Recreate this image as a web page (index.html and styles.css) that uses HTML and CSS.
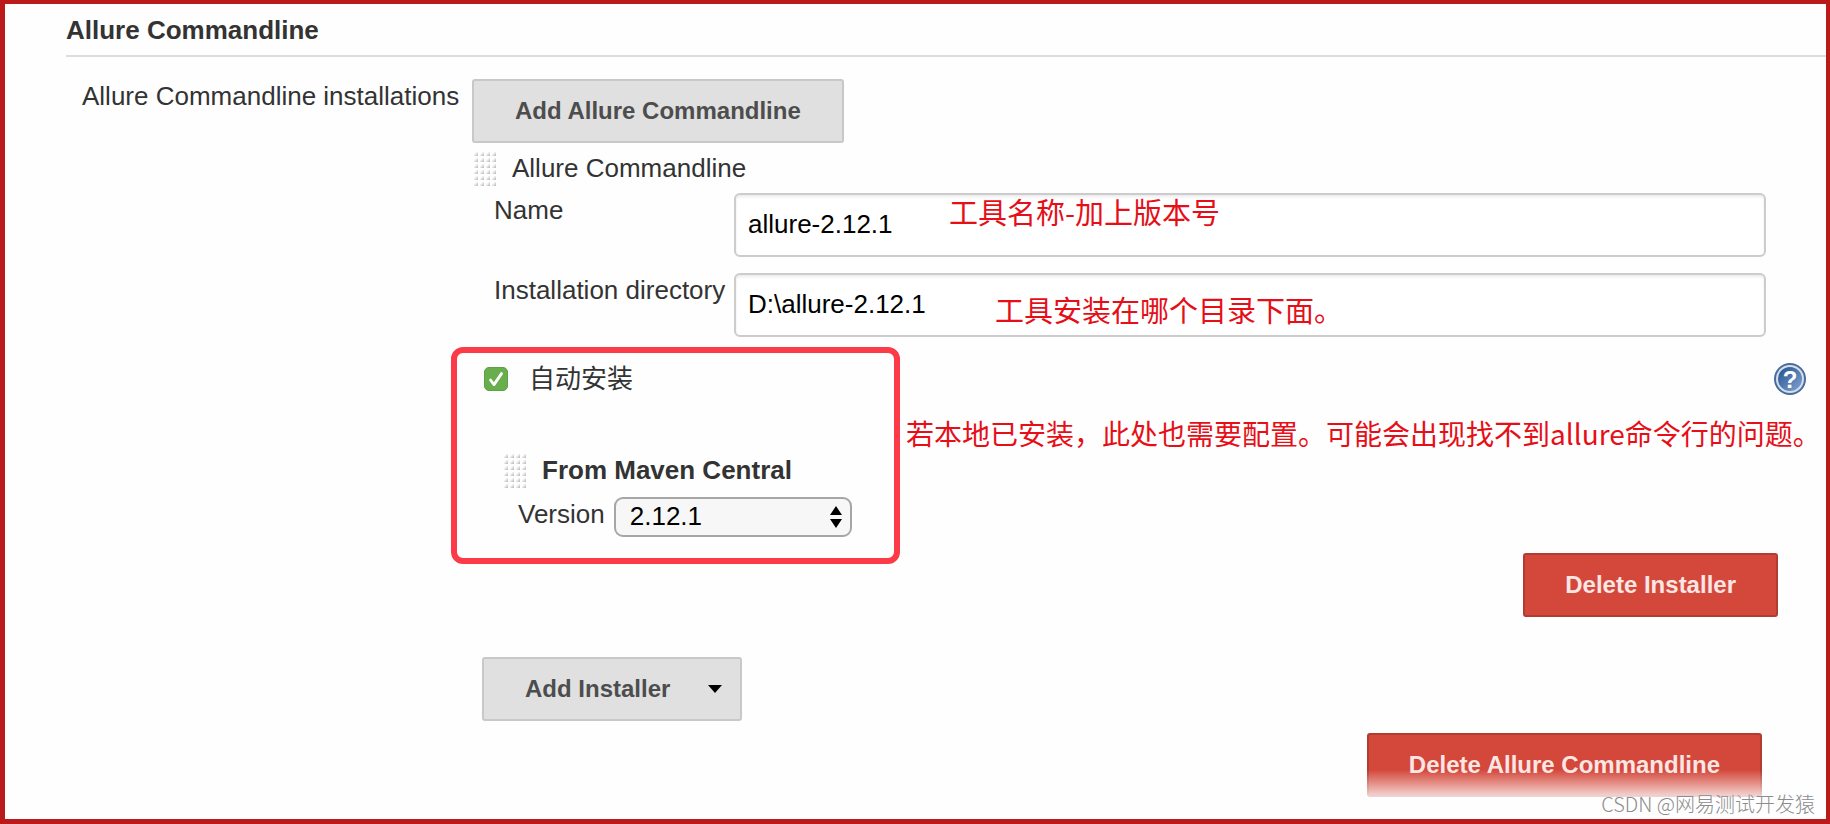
FILE: index.html
```html
<!DOCTYPE html>
<html lang="zh-CN">
<head>
<meta charset="UTF-8" />
<meta name="viewport" content="width=device-width, initial-scale=1" />
<title>Allure Commandline</title>
<link rel="stylesheet" href="styles.css">
</head>
<body>

<main class="panel">
  <h1 class="section-title">Allure Commandline</h1>

  <div class="section">
    <div class="section-label">Allure Commandline installations</div>

    <div class="section-body">
      <button type="button" class="btn">Add Allure Commandline</button>

      <div class="drag-row">
        <span class="grip"></span>
        <span>Allure Commandline</span>
      </div>

      <div class="field">
        <label for="toolName">Name</label>
        <input type="text" id="toolName" value="allure-2.12.1" />
        <span class="note note-name">工具名称-加上版本号</span>
      </div>

      <div class="field">
        <label for="toolHome">Installation directory</label>
        <input type="text" id="toolHome" value="D:\allure-2.12.1" />
        <span class="note note-home">工具安装在哪个目录下面。</span>
      </div>

      <div class="installer">
        <div class="highlight"></div>
        <span class="note note-installer">若本地已安装，此处也需要配置。可能会出现找不到allure命令行的问题。</span>

        <div class="auto-row">
          <span class="check">
            <input type="checkbox" id="autoInstall" checked />
            <svg viewBox="0 0 24 24" aria-hidden="true">
              <path d="M6.5 13L10 17.6L17.5 6.6" fill="none" stroke="#fff" stroke-width="2.8" stroke-linecap="round" stroke-linejoin="round"/>
            </svg>
          </span>
          <label for="autoInstall">自动安装</label>
          <a class="help" href="#" aria-label="Help">
            <svg viewBox="0 0 32 32">
              <defs>
                <linearGradient id="helpFill" x1="0" y1="0" x2="1" y2="1">
                  <stop offset="0" stop-color="#1f4c8c"/>
                  <stop offset="1" stop-color="#86a9d4"/>
                </linearGradient>
              </defs>
              <circle cx="16" cy="16" r="16" fill="#4a6c9c"/>
              <circle cx="16" cy="16" r="13" fill="url(#helpFill)" stroke="#d3dfef" stroke-width="2"/>
              <text x="16" y="25" text-anchor="middle" fill="#fff" class="help-mark">?</text>
            </svg>
          </a>
        </div>

        <div class="drag-row maven">
          <span class="grip"></span>
          <strong>From Maven Central</strong>
        </div>

        <div class="version-row">
          <label for="version">Version</label>
          <span class="select">
            <select id="version">
              <option>2.12.1</option>
            </select>
            <svg viewBox="0 0 12 22" aria-hidden="true">
              <path d="M6 0L12 9H0Z M0 13H12L6 22Z"/>
            </svg>
          </span>
        </div>
      </div>

      <div class="delete-row delete-installer">
        <button type="button" class="btn btn-danger">Delete Installer</button>
      </div>

      <button type="button" class="btn btn-menu">Add Installer
        <svg viewBox="0 0 14 8" aria-hidden="true"><path d="M0 0H14L7 8Z"/></svg>
      </button>

      <div class="delete-row delete-tool">
        <button type="button" class="btn btn-danger">Delete Allure Commandline</button>
      </div>
    </div>
  </div>

  <div class="watermark">CSDN @网易测试开发猿</div>
</main>

</body>
</html>
```

FILE: styles.css
```css
* {
  box-sizing: border-box;
}

body {
  margin: 0;
  font-family: 'Liberation Sans', 'Noto Sans CJK SC', sans-serif;
  font-size: 26px;
  line-height: 30px;
  color: #333;
  background: #fff;
}

.panel {
  position: relative;
  min-height: 100vh;
  padding-bottom: 22px;
  border: 4px solid #bb1a1a;
  border-left-width: 5px;
  border-bottom-width: 5px;
  background: #fefefe;
  overflow: hidden;
}

.section-title {
  margin: 0 0 0 61px;
  padding: 11px 0 10px;
  border-bottom: 2px solid #ddd;
  font-size: 26px;
  font-weight: 700;
}

.section {
  display: flex;
  padding-top: 22px;
}

.section-label {
  flex: 0 0 467px;
  padding: 2px 0 0 77px;
}

.section-body {
  flex: 1;
  min-width: 0;
}

/* buttons */
.btn {
  display: block;
  height: 64px;
  padding: 0 41px;
  border: 2px solid #c8c8c8;
  border-radius: 3px;
  background: #e0e0e0;
  color: #4d4d4d;
  font-family: inherit;
  font-size: 24px;
  font-weight: 700;
  white-space: nowrap;
  cursor: pointer;
}

.btn-danger {
  padding: 0 40px;
  border-color: #b33c32;
  background: #d4483b;
  color: #fbe6e4;
}

.btn-menu {
  display: flex;
  align-items: center;
  gap: 38px;
  margin: 40px 0 12px 10px;
  padding-right: 18px;
}

.btn-menu svg {
  width: 14px;
  height: 8px;
}

/* drag handle rows */
.drag-row {
  display: flex;
  align-items: center;
  gap: 16px;
  margin: 7px 0 7px 2px;
}

.grip {
  width: 22px;
  height: 36px;
  background:
    linear-gradient(#fefefe 2px, transparent 2px) 0 0 / 6px 6px,
    linear-gradient(90deg, transparent 4px, #fefefe 4px) 0 0 / 6px 6px,
    linear-gradient(135deg, #fefefe 35%, #a8a8a8 90%) 0 0 / 6px 6px;
}

/* text fields */
.field {
  position: relative;
  display: flex;
  align-items: flex-start;
  margin: 0 60px 16px 22px;
}

.field label {
  flex: 0 0 240px;
  padding-top: 2px;
}

.field input {
  flex: 1;
  min-width: 0;
  height: 64px;
  padding: 0 12px 2px;
  border: 2px solid #ccc;
  border-radius: 6px;
  background: #fff;
  box-shadow: inset 0 2px 3px rgba(0, 0, 0, 0.08);
  color: #000;
  font-family: inherit;
  font-size: 26px;
}

/* red remarks lying over the form */
.note {
  position: absolute;
  color: #e60f18;
  font-family: 'Noto Sans CJK SC', sans-serif;
  font-size: 28px;
  white-space: nowrap;
}

.field .note {
  font-size: 29px;
}

.note-name {
  top: 3px;
  left: 455px;
}

.note-home {
  top: 21px;
  left: 501px;
}

.note-installer {
  top: 55px;
  left: 434px;
}

.highlight {
  position: absolute;
  top: -16px;
  bottom: -27px;
  left: -21px;
  width: 449px;
  border: 6px solid #fc3a48;
  border-radius: 12px;
  pointer-events: none;
}

/* installer */
.installer {
  position: relative;
  margin-top: 26px;
}

.auto-row {
  display: flex;
  align-items: center;
  margin: 0 20px 0 12px;
}

.check {
  position: relative;
  width: 24px;
  height: 24px;
  margin-right: 21px;
}

.check input {
  display: block;
  appearance: none;
  width: 24px;
  height: 24px;
  margin: 0;
  border: 1px solid #5f9f45;
  border-radius: 5px;
  background: #69ae4d;
}

.check svg {
  position: absolute;
  inset: 0;
  pointer-events: none;
}

.help {
  width: 32px;
  height: 32px;
  margin-left: auto;
}

.help svg {
  display: block;
}

.help-mark {
  font-size: 24px;
  font-weight: 700;
}

.maven {
  margin: 57px 0 9px 32px;
}

.version-row {
  display: flex;
  gap: 9px;
  margin-left: 46px;
}

.version-row label {
  padding-top: 2px;
}

.select {
  position: relative;
  width: 238px;
}

.select select {
  display: block;
  appearance: none;
  width: 100%;
  height: 40px;
  padding: 0 14px 2px;
  border: 2px solid #a6a6a6;
  border-radius: 9px;
  background: #f7f7f7;
  color: #000;
  font-family: inherit;
  font-size: 26px;
}

.select svg {
  position: absolute;
  top: 9px;
  right: 10px;
  width: 12px;
  height: 22px;
  pointer-events: none;
}

.delete-row {
  position: relative;
  display: flex;
  justify-content: flex-end;
}

.delete-installer {
  margin: 16px 48px 0 0;
}

.delete-tool {
  margin-right: 64px;
}

/* fade out towards the bottom of the form */
.delete-tool::after {
  content: '';
  position: absolute;
  right: 0;
  bottom: 0;
  left: 0;
  height: 27px;
  background: linear-gradient(rgba(254, 254, 254, 0), rgba(254, 254, 254, 0.8));
  pointer-events: none;
}

.watermark {
  position: absolute;
  right: 11px;
  bottom: 0;
  color: #8c8c8c;
  font-family: 'Noto Sans CJK SC', sans-serif;
  font-size: 20px;
  font-weight: 300;
  text-shadow: 1px 1px 1px #fff;
}
```
